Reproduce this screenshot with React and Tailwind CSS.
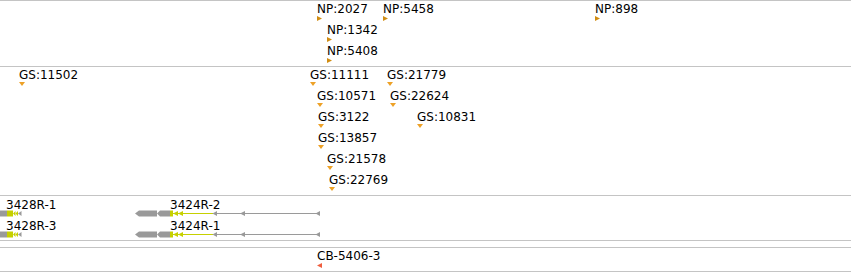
import React from "react";

const NP_COLOR = "#d18d12";
const GS_COLOR = "#eda127";
const CB_COLOR = "#ef5f3f";
const GRAY = "#9a9a9a";
const LIME = "#c6d000";

const npFeatures = [
  { label: "NP:2027", x: 317, row: 0 },
  { label: "NP:5458", x: 383, row: 0 },
  { label: "NP:898", x: 595, row: 0 },
  { label: "NP:1342", x: 327, row: 1 },
  { label: "NP:5408", x: 327, row: 2 },
];

const gsFeatures = [
  { label: "GS:11502", x: 19, row: 0 },
  { label: "GS:11111", x: 310, row: 0 },
  { label: "GS:21779", x: 387, row: 0 },
  { label: "GS:10571", x: 317, row: 1 },
  { label: "GS:22624", x: 390, row: 1 },
  { label: "GS:3122", x: 318, row: 2 },
  { label: "GS:10831", x: 417, row: 2 },
  { label: "GS:13857", x: 318, row: 3 },
  { label: "GS:21578", x: 327, row: 4 },
  { label: "GS:22769", x: 329, row: 5 },
];

const Marker = ({ kind }) => {
  if (kind === "np") {
    return (
      <svg width="6" height="6" viewBox="0 0 6 6" className="block">
        <polygon points="0,0 5,2.5 0,5" fill={NP_COLOR} />
      </svg>
    );
  }
  if (kind === "gs") {
    return (
      <svg width="7" height="5" viewBox="0 0 7 5" className="block">
        <polygon points="0,0 6,0 3,4" fill={GS_COLOR} />
      </svg>
    );
  }
  return (
    <svg width="6" height="6" viewBox="0 0 6 6" className="block">
      <polygon points="5,0 0,2.5 5,5" fill={CB_COLOR} />
    </svg>
  );
};

const Feature = ({ label, x, row, kind }) => (
  <div className="absolute flex flex-col" style={{ left: x, top: row * 21 + 3 }}>
    <span className="text-[12px] leading-[12px] whitespace-nowrap text-black">{label}</span>
    <div className="mt-[1px]">
      <Marker kind={kind} />
    </div>
  </div>
);

// one row of gene models, drawn across the whole track width
const GeneRow = ({ top }) => (
  <svg width="851" height="7" viewBox="0 0 851 7" className="absolute left-0" style={{ top }}>
    {/* 3428R */}
    <polygon points="0,0.5 7,0.5 7,6.5 0,6.5" fill={GRAY} />
    <rect x="7" y="0.5" width="6" height="6" fill={LIME} />
    <polygon points="13,3.5 15.5,1 15.5,6" fill={LIME} />
    <polygon points="15.5,3.5 18,1 18,6" fill={LIME} />
    <polygon points="18,3.5 21.5,1 21.5,6" fill={GRAY} />

    {/* 3424R */}
    <polygon points="135,3.5 139,0.5 157,0.5 157,6.5 139,6.5" fill={GRAY} />
    <polygon points="157,3.5 160,0.5 170,0.5 170,6.5 160,6.5" fill={GRAY} />
    <rect x="170" y="0.5" width="3" height="6" fill={LIME} />
    <rect x="173" y="3" width="40" height="1" fill={LIME} />
    <polygon points="173,3.5 178,1 178,6" fill={LIME} />
    <polygon points="178,3.5 183,1 183,6" fill={LIME} />
    <rect x="216" y="3" width="104" height="1" fill={GRAY} />
    <polygon points="212.5,3.5 217,1 217,6" fill={GRAY} />
    <polygon points="240,3.5 245,1 245,6" fill={GRAY} />
    <polygon points="315.5,3.5 320,1 320,6" fill={GRAY} />
  </svg>
);

const GeneLabel = ({ label, x, top }) => (
  <span
    className="absolute text-[12px] leading-[12px] whitespace-nowrap text-black"
    style={{ left: x, top }}
  >
    {label}
  </span>
);

export default function App() {
  return (
    <div
      className="w-[851px] h-[272px] bg-white overflow-hidden flex flex-col"
      style={{ fontFamily: "'DejaVu Sans', 'Liberation Sans', sans-serif" }}
    >
      {/* NP track */}
      <div className="relative h-[66px] shrink-0 border-t border-[#c4c4c4]">
        <div className="absolute -top-px left-0 w-full h-full">
          {npFeatures.map((f) => (
            <Feature key={f.label} {...f} kind="np" />
          ))}
        </div>
      </div>

      {/* GS track */}
      <div className="relative h-[129px] shrink-0 border-t border-[#c4c4c4]">
        <div className="absolute -top-px left-0 w-full h-full">
          {gsFeatures.map((f) => (
            <Feature key={f.label} {...f} kind="gs" />
          ))}
        </div>
      </div>

      {/* gene models */}
      <div className="relative h-[46px] shrink-0 border-y border-[#c4c4c4]">
        <div className="absolute -top-px left-0 w-full h-full">
          <GeneLabel label="3428R-1" x={6} top={4} />
          <GeneLabel label="3424R-2" x={170} top={4} />
          <GeneRow top={15} />
          <GeneLabel label="3428R-3" x={6} top={25} />
          <GeneLabel label="3424R-1" x={170} top={25} />
          <GeneRow top={36} />
        </div>
      </div>

      <div className="h-[6px] shrink-0" />

      {/* CB track */}
      <div className="relative h-[25px] shrink-0 border-y border-[#c4c4c4]">
        <div className="absolute -top-px left-0 w-full h-full">
          <Feature label="CB-5406-3" x={317} row={0} kind="cb" />
        </div>
      </div>
    </div>
  );
}
